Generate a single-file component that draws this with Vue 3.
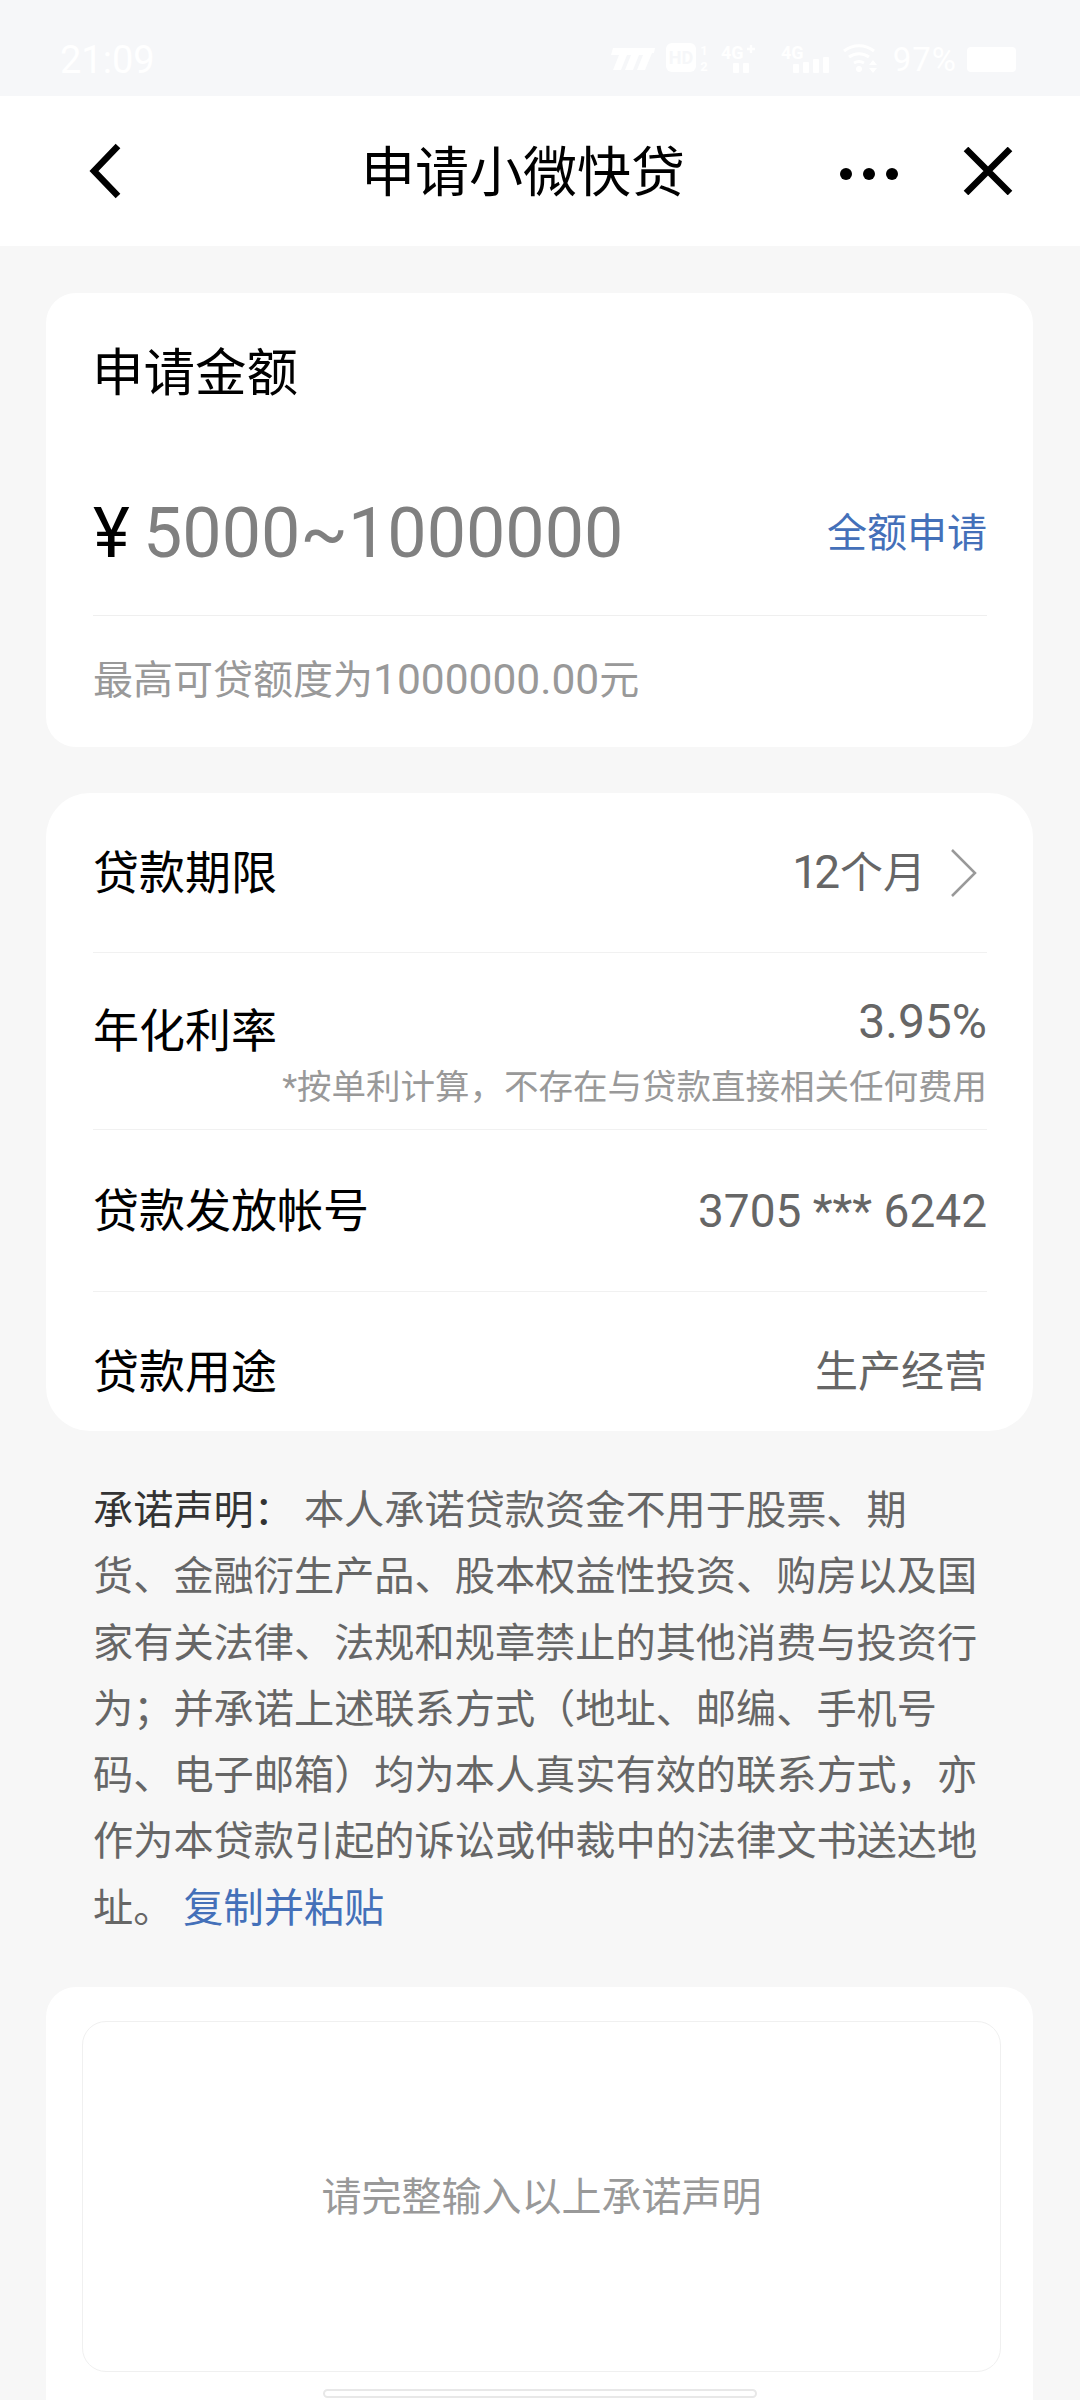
<template>
  <div class="page">
    <div class="status">
      <span class="time">21:09</span>
      <div class="status-right">
        <svg class="s-nfc" width="45" height="22" viewBox="0 0 45 22"><path d="M3 0h42l-1 5h-2l-7 17h-8l6-15h-4l-6 15h-8l6-15h-4L11 22H3l6-15H1z" fill="#fff"/></svg>
        <svg class="s-hd" width="42" height="30" viewBox="0 0 42 30">
          <rect x="0" y="0" width="30" height="29" rx="6" fill="#fff"/>
          <text x="15" y="21" font-size="18" font-weight="700" text-anchor="middle" fill="#f6f7f9">HD</text>
          <text x="38" y="12" font-size="13" font-weight="700" text-anchor="middle" fill="#fff">1</text>
          <text x="38" y="28" font-size="13" font-weight="700" text-anchor="middle" fill="#fff">2</text>
        </svg>
        <svg class="s-4gp" width="35" height="30" viewBox="0 0 35 30">
          <text x="0" y="16" font-size="18" font-weight="700" fill="#fff">4G</text>
          <path d="M26 6h8M30 2v8" stroke="#fff" stroke-width="2.4"/>
          <rect x="12" y="20" width="6" height="10" rx="1" fill="#fff"/>
          <rect x="22" y="20" width="6" height="10" rx="1" fill="#fff"/>
        </svg>
        <svg class="s-4g" width="49" height="30" viewBox="0 0 49 30">
          <text x="0" y="16" font-size="18" font-weight="700" fill="#fff">4G</text>
          <rect x="12" y="21" width="6" height="9" rx="1" fill="#fff"/>
          <rect x="22" y="19" width="6" height="11" rx="1" fill="#fff"/>
          <rect x="32" y="16" width="6" height="14" rx="1" fill="#fff"/>
          <rect x="42" y="14" width="6" height="16" rx="1" fill="#fff"/>
        </svg>
        <svg class="s-wifi" width="35" height="30" viewBox="0 0 35 30">
          <path d="M1 8a24 24 0 0 1 30 0M6 14a17 17 0 0 1 20 0M11 20a10 10 0 0 1 10 0" fill="none" stroke="#fff" stroke-width="3"/>
          <circle cx="16" cy="26" r="3" fill="#fff"/>
          <path d="M30 17l4 5h-8zM30 30l4-5h-8z" fill="#fff"/>
        </svg>
        <span class="pct">97%</span>
        <span class="battery"></span>
      </div>
    </div>

    <div class="nav">
      <svg class="nav-back" width="34" height="56" viewBox="0 0 34 56"><path d="M30 3 6 28l24 25" fill="none" stroke="#000" stroke-width="6.5"/></svg>
      <div class="nav-title">申请小微快贷</div>
      <div class="nav-dots"><i></i><i></i><i></i></div>
      <svg class="nav-close" width="50" height="48" viewBox="0 0 50 48"><path d="M3 2l44 44M47 2 3 46" fill="none" stroke="#000" stroke-width="6.5"/></svg>
    </div>

    <div class="card amount-card">
      <div class="card-title">申请金额</div>
      <div class="amount-row">
        <span class="yen">¥</span>
        <span class="amount">5000~1000000</span>
        <span class="link all">全额申请</span>
      </div>
      <div class="hint">最高可贷额度为<span class="hint-num">1000000.00</span>元</div>
    </div>

    <div class="card info-card">
      <div class="row row-term">
        <span class="label">贷款期限</span>
        <span class="value"><span class="num tight">12</span>个月</span>
        <svg class="arrow" width="28" height="50" viewBox="0 0 28 50"><path d="M2 2l23 23L2 48" fill="none" stroke="#999" stroke-width="2.5"/></svg>
      </div>
      <div class="row row-rate">
        <span class="label">年化利率</span>
        <div class="rate-right">
          <div class="value rate">3.95%</div>
          <div class="note">*按单利计算，不存在与贷款直接相关任何费用</div>
        </div>
      </div>
      <div class="row row-account">
        <span class="label">贷款发放帐号</span>
        <span class="value num">3705 *** 6242</span>
      </div>
      <div class="row row-use">
        <span class="label">贷款用途</span>
        <span class="value">生产经营</span>
      </div>
    </div>

    <p class="promise"><span class="promise-head">承诺声明：</span> 本人承诺贷款资金不用于股票、期货、金融衍生产品、股本权益性投资、购房以及国家有关法律、法规和规章禁止的其他消费与投资行为；并承诺上述联系方式（地址、邮编、手机号码、电子邮箱）均为本人真实有效的联系方式，亦作为本贷款引起的诉讼或仲裁中的法律文书送达地址。 <span class="link">复制并粘贴</span></p>

    <div class="card input-card">
      <div class="input-box">请完整输入以上承诺声明</div>
      <div class="handle"></div>
    </div>
  </div>
</template>

<script setup>
</script>

<style>
html, body { background: #f7f7f7; }
</style>

<style scoped>
.page {
  width: 1080px;
  height: 2400px;
  overflow: hidden;
  background: #f7f7f7;
  font-family: Roboto, "Noto Sans CJK SC", sans-serif;
  text-spacing-trim: space-all;
}
.status {
  height: 96px;
  background: #f6f7f9;
  display: flex;
  justify-content: space-between;
  padding: 43px 64px 0 60px;
  box-sizing: border-box;
  color: #fff;
}
.time { font-size: 38px; line-height: 34px; }
.status-right {
  display: flex;
  align-items: flex-start;
}
.s-nfc { margin-top: 5px; }
.s-hd { margin-left: 11px; }
.s-4gp { margin-left: 13px; }
.s-4g { margin-left: 25px; }
.s-wifi { margin-left: 13px; }
.pct { font-size: 33px; line-height: 34px; letter-spacing: 1px; margin-left: 15px; }
.battery {
  width: 49px;
  height: 25px;
  margin-top: 4px;
  margin-left: 10px;
  border-radius: 4px;
  background: #fff;
}

.nav {
  height: 150px;
  background: #fff;
  display: flex;
  align-items: center;
  padding-left: 88px;
  box-sizing: border-box;
}
.nav-title {
  font-size: 54px;
  line-height: 60px;
  color: #000;
  margin-left: 239px;
  margin-top: 5px;
}
.nav-dots {
  display: flex;
  gap: 11px;
  margin-left: 155px;
  margin-top: 5px;
}
.nav-dots i {
  width: 12px;
  height: 12px;
  border-radius: 50%;
  background: #000;
}
.nav-close { margin-left: 65px; }

.card {
  margin: 0 47px 0 46px;
  background: #fff;
  border-radius: 30px;
  padding: 0 46px 0 47px;
}
.amount-card {
  margin-top: 47px;
  height: 454px;
  box-sizing: border-box;
  padding-top: 44px;
}
.card-title {
  font-size: 51.5px;
  line-height: 74px;
  color: #000;
  margin-left: -1px;
}
.amount-row {
  display: flex;
  align-items: center;
  margin-top: 39px;
  height: 166px;
  box-sizing: border-box;
  border-bottom: 1px solid #efefef;
}
.yen { font-size: 70px; color: #000; width: 50px; }
.amount { font-size: 70px; color: #808080; flex: 1; }
.link { color: #4470b9; }
.all { font-size: 40px; margin-top: -5px; }
.hint {
  font-size: 40px;
  line-height: 50px;
  color: #999;
  margin-top: 39px;
}
.hint-num { font-size: 42.5px; }

.info-card {
  margin-top: 46px;
  height: 638px;
  border-radius: 44px;
  box-sizing: border-box;
}
.row {
  display: flex;
  align-items: center;
  justify-content: space-between;
  border-bottom: 1px solid #f1f1f1;
  box-sizing: border-box;
}
.row-term { height: 160px; }
.row-rate { height: 177px; align-items: flex-start; padding-top: 44px; }
.row-account { height: 162px; }
.row-use { height: 139px; padding-top: 21px; border-bottom: none; }
.label { font-size: 46px; line-height: 60px; color: #000; }
.row-rate .label { margin-top: 4px; }
.value { font-size: 43px; line-height: 50px; color: #666; }
.value.rate { font-size: 48px; }
.value.num, .num { font-size: 46px; }
.tight { letter-spacing: -4px; margin-right: 4px; }
.row-term .value { margin-left: auto; margin-right: 24px; }
.arrow { margin-right: 9px; }
.rate-right { text-align: right; }
.note { font-size: 34.5px; line-height: 46px; color: #999; margin-top: 17px; }

.promise {
  margin: 0;
  padding: 47px 98px 0 93px;
  font-size: 40.2px;
  line-height: 66.3px;
  color: #666;
}
.promise-head { color: #333; }

.input-card {
  margin-top: 45px;
  height: 500px;
  padding: 34px 32px 0 36px;
  box-sizing: border-box;
}
.input-box {
  height: 351px;
  box-sizing: border-box;
  border: 1px solid #f0f0f0;
  border-radius: 24px;
  padding-bottom: 5px;
  display: flex;
  align-items: center;
  justify-content: center;
  font-size: 40px;
  color: #999;
}
.handle {
  width: 434px;
  height: 9px;
  margin: 17px 0 0 241px;
  box-sizing: border-box;
  border: 2px solid #e8e8e8;
  border-radius: 5px;
  background: #fff;
}
</style>
